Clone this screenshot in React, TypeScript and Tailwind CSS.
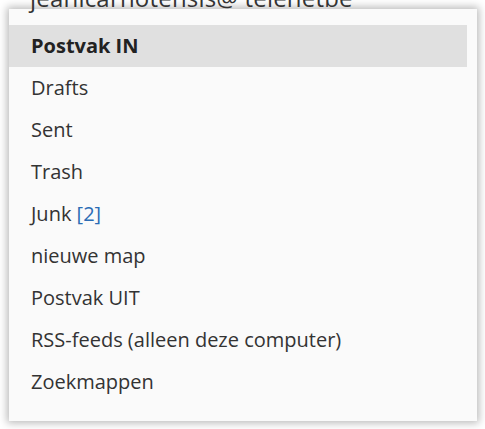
import React from "react";

const items = ["Drafts", "Sent", "Trash", "Junk", "nieuwe map", "Postvak UIT", "RSS-feeds (alleen deze computer)", "Zoekmappen"];

export default function App() {
  return (
    <div className="w-[485px] h-[429px] bg-white pt-[9px] pl-[9px] overflow-hidden" style={{ fontFamily: '"Open Sans", "Noto Sans", sans-serif' }}>
      <div className="w-[468px] h-[412px] bg-[#fafafa] shadow-[0_0_8px_2px_rgba(0,0,0,0.28)] flex flex-col">
        <div className="-mt-[33px] h-[43px] mb-[6px] flex items-center pl-[21px] text-[24px] tracking-[0.2px] text-[#333] whitespace-nowrap">
          jeanlcarnotensis@ telenetbe
        </div>
        <div className="h-[42px] w-[458px] bg-[#e0e0e0] flex items-center pl-[22px] text-[20px] font-bold text-[#222]">Postvak IN</div>
        {items.map((t) => (
          <div key={t} className="h-[42px] flex items-center pl-[22px] text-[20px] text-[#333]">
            {t === "Junk" ? (
              <span>
                Junk <span className="text-[#2b6cb5]">[2]</span>
              </span>
            ) : (
              t
            )}
          </div>
        ))}
      </div>
    </div>
  );
}
